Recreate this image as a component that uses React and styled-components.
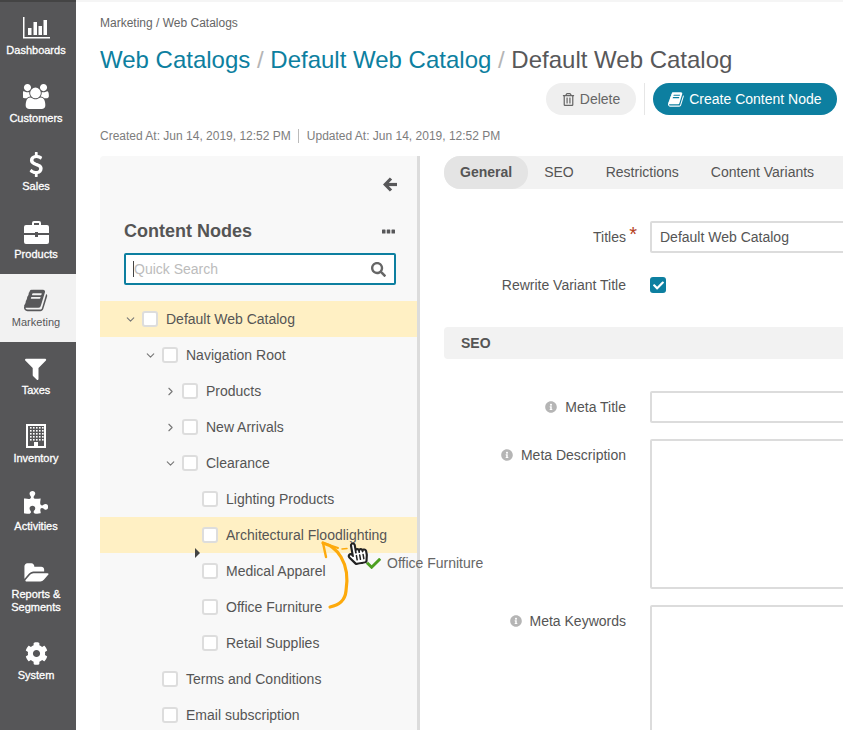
import styled, { createGlobalStyle } from "styled-components";
import {
  FaCog,
  FaRegTrashAlt,
  FaSearch,
  FaInfoCircle,
  FaCheck,
  FaHandPointer,
  FaRegHandPointer,
} from "react-icons/fa";
import { ChevronDown, ChevronRight } from "lucide-react";

const GlobalStyle = createGlobalStyle`
  html, body {
    margin: 0;
    padding: 0;
    background: #fff;
    overflow: hidden;
  }
  * {
    box-sizing: border-box;
  }
`;

const Page = styled.div`
  position: relative;
  display: flex;
  width: 843px;
  height: 730px;
  overflow: hidden;
  font-family: "Liberation Sans", Arial, sans-serif;
  font-size: 14px;
  color: #555;
`;

const Sidebar = styled.nav`
  flex: 0 0 76px;
  height: 100%;
  border-top: 2px solid #444;
  background: #565658;
`;

const NavItem = styled.div`
  display: flex;
  flex-direction: column;
  align-items: center;
  height: ${(p) => (p.$tall ? "81px" : "68px")};
  padding: 12px 4px 0 0;
  background: ${(p) => (p.$active ? "#f2f2f2" : "transparent")};
  color: ${(p) => (p.$active ? "#58585a" : "#fff")};
`;

const NavIcon = styled.div`
  display: flex;
  align-items: center;
  justify-content: center;
  height: 28px;
  font-size: ${(p) => p.$size || 24}px;
`;

const NavLabel = styled.div`
  margin-top: 2px;
  font-size: 11px;
  line-height: 13px;
  text-align: center;
  -webkit-text-stroke: ${(p) => (p.$active ? "0" : "0.3px #fff")};
`;

const Main = styled.main`
  flex: 1;
  min-width: 0;
  border-top: 2px solid #f5f5f5;
  padding: 0 6px 0 24px;
`;

const Breadcrumbs = styled.div`
  margin-top: 14px;
  font-size: 12px;
  line-height: 14px;
  color: #666;
`;

const Title = styled.h1`
  margin: 15px 0 0;
  font-size: 24px;
  line-height: 30px;
  font-weight: 400;
  white-space: nowrap;
  color: #58585a;
`;

const TitleLink = styled.span`
  color: #0d7fa0;
`;

const TitleSep = styled.span`
  color: #b5b5b5;
`;

const Actions = styled.div`
  display: flex;
  justify-content: flex-end;
  align-items: stretch;
  height: 32px;
  margin-top: 8px;
`;

const Button = styled.div`
  display: flex;
  align-items: center;
  justify-content: center;
  gap: 5px;
  width: ${(p) => p.$width}px;
  border-radius: 16px;
  font-size: 14px;
  background: ${(p) => (p.$primary ? "#0d7fa0" : "#efefef")};
  color: ${(p) => (p.$primary ? "#fff" : "#666")};
`;

const ActionDivider = styled.div`
  width: 1px;
  margin: 0 8px;
  background: #e6e6e6;
`;

const Stamps = styled.div`
  display: flex;
  align-items: center;
  margin-top: 14px;
  font-size: 12px;
  line-height: 14px;
  color: #7d7d7d;
`;

const StampDivider = styled.span`
  width: 1px;
  height: 14px;
  margin: 0 8px 0 7px;
  background: #bbb;
`;

const Columns = styled.div`
  display: flex;
  margin-top: 13px;
  width: 800px;
`;

const TreePanel = styled.section`
  flex: 0 0 320px;
  height: 574px;
  border-right: 3px solid #dcdcdc;
  background: #f8f8f8;
  border-radius: 4px 0 0 0;
`;

const BackRow = styled.div`
  display: flex;
  justify-content: flex-end;
  padding: 21px 20px 0 0;
  height: 60px;
  color: #58585a;
`;

const PanelHead = styled.div`
  display: flex;
  justify-content: space-between;
  align-items: center;
  height: 30px;
  padding: 0 22px 0 24px;
`;

const PanelTitle = styled.h2`
  margin: 0;
  font-size: 18px;
  line-height: 30px;
  font-weight: 700;
  color: #555;
`;

const Search = styled.div`
  display: flex;
  align-items: center;
  justify-content: space-between;
  width: 272px;
  height: 32px;
  margin: 7px 0 16px 24px;
  padding: 0 8px 0 7px;
  border: 2px solid #0d7fa0;
  border-radius: 2px;
  background: #fff;
  color: #666;
`;

const SearchText = styled.span`
  border-left: 1px solid #444;
  line-height: 16px;
  color: #bcbcbc;
`;

const TreeRow = styled.div`
  display: flex;
  align-items: center;
  height: 36px;
  padding-left: ${(p) => 23 + p.$level * 20}px;
  background: ${(p) => (p.$selected ? "#fff0c4" : "transparent")};
  white-space: nowrap;
`;

const ChevronSlot = styled.span`
  display: flex;
  align-items: center;
  justify-content: center;
  width: 14px;
  margin-right: 5px;
  color: #777;
`;

const Checkbox = styled.span`
  flex: none;
  width: 16px;
  height: 16px;
  margin-right: 8px;
  border: 2px solid #ddd;
  border-radius: 3px;
  background: #fff;
`;

const Details = styled.section`
  flex: 1;
  min-width: 0;
  padding-left: 24px;
`;

const Tabs = styled.div`
  display: flex;
  align-items: center;
  height: 33px;
  width: 500px;
  background: #f2f2f2;
  border-radius: 16px 0 0 16px;
`;

const Tab = styled.div`
  display: flex;
  align-items: center;
  height: 100%;
  padding: 0 16px 1px;
  border-radius: 16px;
  font-weight: ${(p) => (p.$active ? 700 : 400)};
  background: ${(p) => (p.$active ? "#e4e4e4" : "transparent")};
`;

const Form = styled.div`
  display: flex;
  flex-direction: column;
  gap: 16px;
  padding-top: 32px;
  width: 500px;
`;

const Field = styled.div`
  display: grid;
  grid-template-columns: 182px 1fr;
  column-gap: 24px;
`;

const Label = styled.label`
  display: flex;
  justify-content: flex-end;
  align-items: center;
  gap: 8px;
  height: 32px;
  position: relative;
`;

const Required = styled.span`
  position: absolute;
  right: -11px;
  top: 3px;
  font-size: 20px;
  line-height: 20px;
  color: #b5411c;
`;

const InfoIcon = styled(FaInfoCircle)`
  font-size: 12px;
  color: #b5b5b5;
`;

const Input = styled.div`
  height: ${(p) => p.$height || 32}px;
  padding-left: 8px;
  border: 2px solid #dcdcdc;
  border-radius: 2px;
  background: #fff;
  line-height: 28px;
`;

const CheckBoxRow = styled.div`
  display: flex;
  align-items: center;
  height: 32px;
`;

const Checked = styled.span`
  display: flex;
  align-items: center;
  justify-content: center;
  width: 16px;
  height: 16px;
  border-radius: 3px;
  background: #0d7fa0;
  color: #fff;
  font-size: 11px;
`;

const SectionBar = styled.div`
  height: 32px;
  margin: 10px 0 16px;
  padding-left: 17px;
  border-radius: 4px 0 0 4px;
  background: #f2f2f2;
  font-weight: 700;
  line-height: 32px;
`;

/* drag overlay: ghost label, hand cursor and the annotation arrow */
const DragGhost = styled.div`
  position: absolute;
  left: 366px;
  top: 555px;
  display: flex;
  align-items: center;
  gap: 6px;
  line-height: 16px;
  color: #666;
`;

const DropMarker = styled.div`
  position: absolute;
  left: 195px;
  top: 548px;
  border-left: 5px solid #444;
  border-top: 5px solid transparent;
  border-bottom: 5px solid transparent;
`;

const Hand = styled.div`
  position: absolute;
  left: 346px;
  top: 542px;
  width: 20px;
  height: 24px;
  font-size: 23px;
  line-height: 0;
  transform: rotate(-10deg);
  svg {
    position: absolute;
    left: 0;
    top: 0;
  }
`;

const Arrow = styled.svg`
  position: absolute;
  left: 315px;
  top: 535px;
`;

// font-awesome 4 style glyphs, the packages only carry the newer shapes
const Glyph = ({ w, d, height }) => (
  <svg width={(height * w) / 1792} height={height} viewBox={`0 0 ${w} 1792`} fill="currentColor">
    <path d={d} />
  </svg>
);

const BOOK =
  "M1639 478q40 57 18 129l-275 906q-19 64-76.5 107.5t-122.5 43.5h-923q-77 0-148.5-53.5t-99.5-131.5q-24-67-2-127 0-4 3-27t4-37q1-8-3-21.5t-3-19.5q2-11 8-21t16.5-23.5 16.5-23.5q23-38 45-91.5t30-91.5q3-10 .5-30t-.5-28q3-11 17-28t17-23q21-36 42-92t25-90q1-9-2.5-32t.5-28q4-13 22-30.5t22-22.5q19-26 42.5-84.5t27.5-96.5q1-8-3-25.5t-2-26.5q2-8 9-18t18-23 17-21q8-12 16.5-30.5t15-35 16-36 19.5-32 26.5-23.5 36-11.5 47.5 5.5l-1 3q38-9 51-9h761q74 0 114 56t18 130l-274 906q-36 119-71.5 153.5t-128.5 34.5h-869q-27 0-38 15-11 16-1 43 24 70 144 70h923q29 0 56-15.5t35-41.5l300-987q7-22 5-57 38 15 59 43zm-1064 2q-4 13 2 22.5t20 9.5h608q13 0 25.5-9.5t16.5-22.5l21-64q4-13-2-22.5t-20-9.5h-608q-13 0-25.5 9.5t-16.5 22.5zm-83 256q-4 13 2 22.5t20 9.5h608q13 0 25.5-9.5t16.5-22.5l21-64q4-13-2-22.5t-20-9.5h-608q-13 0-25.5 9.5t-16.5 22.5z";
const USERS =
  "M529 896q-162 5-265 128h-134q-82 0-138-40.5t-56-118.5q0-353 124-353 6 0 43.5 21t97.5 42.5 119 21.5q67 0 133-23-5 37-5 66 0 139 81 256zm1071 637q0 120-73 189.5t-194 69.5h-874q-121 0-194-69.5t-73-189.5q0-53 3.5-103.5t14-109 26.5-108.5 43-97.5 62-81 85.5-53.5 111.5-20q10 0 43 21.5t73 48 107 48 135 21.5 135-21.5 107-48 73-48 43-21.5q61 0 111.5 20t85.5 53.5 62 81 43 97.5 26.5 108.5 14 109 3.5 103.5zm-1024-1277q0 106-75 181t-181 75-181-75-75-181 75-181 181-75 181 75 75 181zm704 384q0 159-112.5 271.5t-271.5 112.5-271.5-112.5-112.5-271.5 112.5-271.5 271.5-112.5 271.5 112.5 112.5 271.5zm576 225q0 78-56 118.5t-138 40.5h-134q-103-123-265-128 81-117 81-256 0-29-5-66 66 23 133 23 59 0 119-21.5t97.5-42.5 43.5-21q124 0 124 353zm-128-609q0 106-75 181t-181 75-181-75-75-181 75-181 181-75 181 75 75 181z";
const DOLLAR =
  "M978 1185q0 153-99.5 263.5t-258.5 136.5v175q0 14-9 23t-23 9h-135q-13 0-22.5-9.5t-9.5-22.5v-175q-66-9-127.5-31t-101.5-44.5-74-48-46.5-37.5-17.5-18q-17-21-2-41l103-135q7-10 23-12 15-2 24 9l2 2q113 99 243 125 37 8 74 8 81 0 142.5-43t61.5-122q0-28-15-53t-33.5-42-58.5-37.5-66-32-80-32.5q-39-16-61.5-25t-61.5-26.5-62.5-31-56.5-35.5-53.5-42.5-43.5-49-35.5-58-21-66.5-8.5-78q0-138 98-242t255-134v-180q0-13 9.5-22.5t22.5-9.5h135q14 0 23 9t9 23v176q57 6 110.5 23t87 33.5 63.5 37.5 39 29 15 14q17 18 5 38l-81 146q-8 15-23 16-14 3-27-7-3-3-14.5-12t-39-26.5-58.5-32-74.5-26-85.5-11.5q-95 0-155 43t-60 111q0 26 8.5 48t29.5 41.5 39.5 33 56 31 60.5 27 70 27.5q53 20 81 31.5t76 35 75.5 42.5 62 50 53 63.5 31.5 76.5 13 94z";
const FILTER =
  "M1403 295q17 41-14 70l-493 493v742q0 42-39 59-13 5-25 5-27 0-45-19l-256-256q-19-19-19-45v-486l-493-493q-31-29-14-70 17-39 59-39h1280q42 0 59 39z";
const PUZZLE =
  "M1664 1098q0 81-44.5 135t-123.5 54q-41 0-77.5-17.5t-59-38-56.5-38-71-17.5q-110 0-110 124 0 39 16 115t15 115v5q-22 0-33 1-34 3-97.5 11.5t-115.5 13.5-98 5q-61 0-103-26.5t-42-83.5q0-37 17.5-71t38-56.5 38-59 17.5-77.5q0-79-54-123.5t-135-44.5q-84 0-143 45.5t-59 127.5q0 43 15 83t33.5 64.5 33.5 53 15 50.5q0 45-46 89-37 35-117 35-95 0-245-24-9-2-27.5-4t-27.5-4l-13-2q-1 0-3-1-2 0-2-1v-1024q2 1 17.5 3.5t34 5 21.5 3.5q150 24 245 24 80 0 117-35 46-44 46-89 0-22-15-50.5t-33.5-53-33.5-64.5-15-83q0-82 59-127.5t144-45.5q80 0 134 44.5t54 123.5q0 41-17.5 77.5t-38 59-38 56.5-17.5 71q0 57 42 83.5t103 26.5q64 0 180-15t163-17v2q-1 2-3.5 17.5t-5 34-3.5 21.5q-24 150-24 245 0 80 35 117 44 46 89 46 22 0 50.5-15t53-33.5 64.5-33.5 83-15q82 0 127.5 59t45.5 143z";
const FOLDER =
  "M1991 1008q0 31-31 66l-336 396q-43 51-120.5 86.5t-143.5 35.5h-1088q-34 0-60.5-13t-26.5-43q0-31 31-66l336-396q43-51 120.5-86.5t143.5-35.5h1088q34 0 60.5 13t26.5 43zm-343-344v160h-832q-94 0-197 47.5t-164 119.5l-337 396-5 6q0-4-.5-12.5t-.5-12.5v-960q0-92 66-158t158-66h320q92 0 158 66t66 158v32h544q92 0 158 66t66 158z";

const DashboardIcon = () => (
  <svg width="27" height="22" viewBox="0 0 27 22" fill="#fff">
    <rect x="0" y="0" width="1.5" height="21" />
    <rect x="0" y="20" width="27" height="1.5" />
    <rect x="5" y="11" width="3.5" height="7" />
    <rect x="10.5" y="5" width="3.5" height="13" />
    <rect x="15.5" y="9" width="3.5" height="9" />
    <rect x="20.5" y="3" width="3.5" height="15" />
  </svg>
);

const BriefcaseIcon = () => (
  <svg width="25" height="23" viewBox="0 0 25 23" fill="#fff">
    <path d="M8 4V2a2 2 0 0 1 2-2h5a2 2 0 0 1 2 2v2h-2V2h-5v2z" />
    <path d="M2 4h21a2 2 0 0 1 2 2v6H14v-1h-3v1H0V6a2 2 0 0 1 2-2z" />
    <path d="M0 14h11v2h3v-2h11v7a2 2 0 0 1-2 2H2a2 2 0 0 1-2-2z" />
  </svg>
);

const BuildingIcon = () => {
  const cols = [4, 7, 10, 13, 16];
  const rows = [3, 6, 9, 12, 15];
  return (
    <svg width="20" height="24" viewBox="0 0 20 24" fill="#fff">
      <path d="M0 0h20v24H0zM2 2v20h16V2z" fillRule="evenodd" />
      {rows.map((y) =>
        cols.map((x) => <rect key={`${x}-${y}`} x={x} y={y} width="1.6" height="1.6" />)
      )}
      <rect x="8" y="18" width="4" height="4" />
    </svg>
  );
};

const BackArrow = () => (
  <svg width="14" height="15" viewBox="0 0 14 15" fill="none" stroke="currentColor" strokeWidth="3.2">
    <path d="M8 1.5L2.2 7.5L8 13.5" />
    <path d="M3 7.5H14" />
  </svg>
);

const MoreDots = () => (
  <svg width="13" height="5" viewBox="0 0 13 5" fill="#58585a">
    <rect x="0" y="0.5" width="3.5" height="4" rx="0.6" />
    <rect x="4.75" y="0.5" width="3.5" height="4" rx="0.6" />
    <rect x="9.5" y="0.5" width="3.5" height="4" rx="0.6" />
  </svg>
);

const navItems = [
  { label: "Dashboards", icon: <DashboardIcon /> },
  { label: "Customers", icon: <Glyph w={1920} d={USERS} height={25} /> },
  { label: "Sales", icon: <Glyph w={1024} d={DOLLAR} height={25} /> },
  { label: "Products", icon: <BriefcaseIcon /> },
  { label: "Marketing", icon: <Glyph w={1664} d={BOOK} height={25} />, active: true },
  { label: "Taxes", icon: <Glyph w={1408} d={FILTER} height={27} /> },
  { label: "Inventory", icon: <BuildingIcon /> },
  { label: "Activities", icon: <Glyph w={1664} d={PUZZLE} height={26} /> },
  { label: "Reports & Segments", icon: <Glyph w={2048} d={FOLDER} height={23} />, tall: true },
  { label: "System", icon: <FaCog />, size: 23 },
];

const treeRows = [
  { label: "Default Web Catalog", level: 0, open: "down", selected: true },
  { label: "Navigation Root", level: 1, open: "down" },
  { label: "Products", level: 2, open: "right" },
  { label: "New Arrivals", level: 2, open: "right" },
  { label: "Clearance", level: 2, open: "down" },
  { label: "Lighting Products", level: 3 },
  { label: "Architectural Floodlighting", level: 3, selected: true },
  { label: "Medical Apparel", level: 3 },
  { label: "Office Furniture", level: 3 },
  { label: "Retail Supplies", level: 3 },
  { label: "Terms and Conditions", level: 1 },
  { label: "Email subscription", level: 1 },
];

const App = () => {
  return (
    <Page>
      <GlobalStyle />
      <Sidebar>
        {navItems.map((item) => (
          <NavItem key={item.label} $active={item.active} $tall={item.tall}>
            <NavIcon $size={item.size}>{item.icon}</NavIcon>
            <NavLabel $active={item.active}>{item.label}</NavLabel>
          </NavItem>
        ))}
      </Sidebar>

      <Main>
        <Breadcrumbs>Marketing / Web Catalogs</Breadcrumbs>
        <Title>
          <TitleLink>Web Catalogs</TitleLink> <TitleSep>/</TitleSep>{" "}
          <TitleLink>Default Web Catalog</TitleLink> <TitleSep>/</TitleSep>{" "}
          Default Web Catalog
        </Title>
        <Actions>
          <Button $width={90}>
            <FaRegTrashAlt size={13} />
            Delete
          </Button>
          <ActionDivider />
          <Button $primary $width={184}>
            <Glyph w={1664} d={BOOK} height={17} />
            Create Content Node
          </Button>
        </Actions>
        <Stamps>
          Created At: Jun 14, 2019, 12:52 PM
          <StampDivider />
          Updated At: Jun 14, 2019, 12:52 PM
        </Stamps>

        <Columns>
          <TreePanel>
            <BackRow>
              <BackArrow />
            </BackRow>
            <PanelHead>
              <PanelTitle>Content Nodes</PanelTitle>
              <MoreDots />
            </PanelHead>
            <Search>
              <SearchText>Quick Search</SearchText>
              <FaSearch size={15} />
            </Search>
            {treeRows.map((row) => (
              <TreeRow key={row.label} $level={row.level} $selected={row.selected}>
                <ChevronSlot>
                  {row.open === "down" && <ChevronDown size={13} />}
                  {row.open === "right" && <ChevronRight size={13} />}
                </ChevronSlot>
                <Checkbox />
                {row.label}
              </TreeRow>
            ))}
          </TreePanel>

          <Details>
            <Tabs>
              <Tab $active>General</Tab>
              <Tab>SEO</Tab>
              <Tab>Restrictions</Tab>
              <Tab>Content Variants</Tab>
            </Tabs>
            <Form>
              <Field>
                <Label>
                  Titles
                  <Required>*</Required>
                </Label>
                <Input>Default Web Catalog</Input>
              </Field>
              <Field>
                <Label>Rewrite Variant Title</Label>
                <CheckBoxRow>
                  <Checked>
                    <FaCheck />
                  </Checked>
                </CheckBoxRow>
              </Field>
              <SectionBar>SEO</SectionBar>
              <Field>
                <Label>
                  <InfoIcon />
                  Meta Title
                </Label>
                <Input />
              </Field>
              <Field>
                <Label>
                  <InfoIcon />
                  Meta Description
                </Label>
                <Input $height={150} />
              </Field>
              <Field>
                <Label>
                  <InfoIcon />
                  Meta Keywords
                </Label>
                <Input $height={150} />
              </Field>
            </Form>
          </Details>
        </Columns>
      </Main>

      <DropMarker />
      <DragGhost>
        <FaCheck size={15} color="#4c9f20" />
        Office Furniture
      </DragGhost>
      <Arrow width="40" height="80" viewBox="0 0 40 80" fill="none" stroke="#fdaa0c" strokeWidth="3.2" strokeLinecap="round">
        <path d="M15 72 C24 70 30 66 31 56 C33 44 32 32 26 22 C22 15 15 10 8 8" />
        <path d="M8 8 L11 22" strokeWidth="2.4" />
        <path d="M8 8 L23 13" strokeWidth="2" />
        <path d="M27 14 L32 13.5" strokeWidth="1.5" />
      </Arrow>
      <Hand>
        <FaHandPointer color="#fff" />
        <FaRegHandPointer color="#222" />
      </Hand>
    </Page>
  );
};

export default App;
